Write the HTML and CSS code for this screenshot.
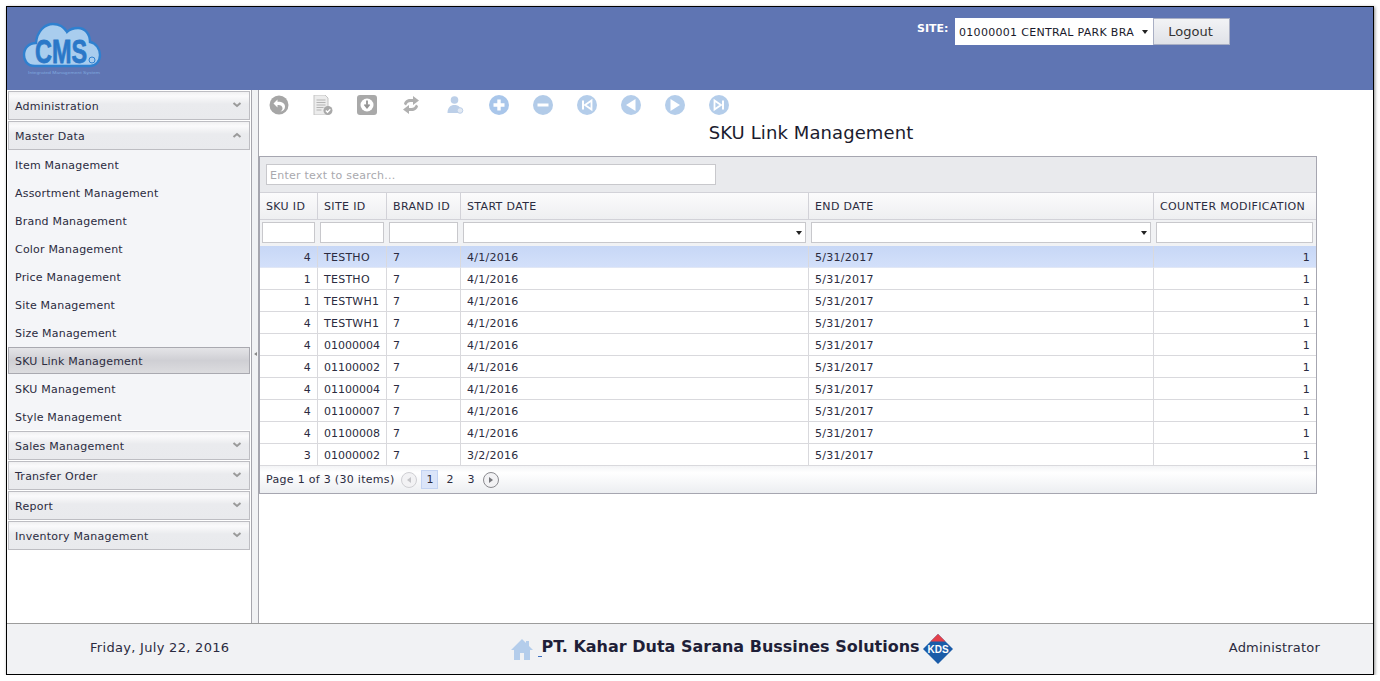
FILE: index.html
```html
<!DOCTYPE html>
<html lang="en">
<head>
<meta charset="utf-8">
<title>SKU Link Management</title>
<link rel="stylesheet" href="styles.css">
</head>
<body>
<div class="frame">
  <header class="header">
    <svg class="logo" width="80" height="56" viewBox="0 0 80 56">
      <path d="M11 43C2 43 0 36 0 32 0 25 5 20 12 20 13 8 21 1 29 1 35 1 40 4 43 9 46 6 50 5 54 5 61 5 66 11 66 19 72 20 76 26 76 32 76 38 72 43 66 43Z" fill="#a9cdee" stroke="#2f80cf" stroke-width="2.400"/>
      <text x="37" y="40" class="logo-text" text-anchor="middle" textLength="52" lengthAdjust="spacingAndGlyphs">CMS</text>
      <circle cx="68" cy="37" r="3" fill="#a9cdee" stroke="#2f80cf"/>
      <text x="4" y="51" class="logo-tag" textLength="72" lengthAdjust="spacingAndGlyphs">Integrated Management System</text>
    </svg>
    <div class="site">
      <span class="site-label">SITE:</span>
      <div class="site-select"><span class="site-value">01000001 CENTRAL PARK BRA</span><i class="arrow"></i></div>
      <div class="logout">Logout</div>
    </div>
  </header>
  <div class="main">
    <aside class="sidebar">
      <div class="group">Administration<svg class="chev" width="10" height="6" viewBox="0 0 10 6"><path d="M1.500 1l3.500 3 3.500-3" fill="none" stroke="#9a9a9a" stroke-width="2"/></svg></div>
      <div class="group">Master Data<svg class="chev" width="10" height="6" viewBox="0 0 10 6"><path d="M1.500 5l3.500-3 3.500 3" fill="none" stroke="#9a9a9a" stroke-width="2"/></svg></div>
      <ul class="items">
        <li class="item">Item Management</li>
        <li class="item">Assortment Management</li>
        <li class="item">Brand Management</li>
        <li class="item">Color Management</li>
        <li class="item">Price Management</li>
        <li class="item">Site Management</li>
        <li class="item">Size Management</li>
        <li class="item selected">SKU Link Management</li>
        <li class="item">SKU Management</li>
        <li class="item">Style Management</li>
      </ul>
      <div class="group">Sales Management<svg class="chev" width="10" height="6" viewBox="0 0 10 6"><path d="M1.500 1l3.500 3 3.500-3" fill="none" stroke="#9a9a9a" stroke-width="2"/></svg></div>
      <div class="group">Transfer Order<svg class="chev" width="10" height="6" viewBox="0 0 10 6"><path d="M1.500 1l3.500 3 3.500-3" fill="none" stroke="#9a9a9a" stroke-width="2"/></svg></div>
      <div class="group">Report<svg class="chev" width="10" height="6" viewBox="0 0 10 6"><path d="M1.500 1l3.500 3 3.500-3" fill="none" stroke="#9a9a9a" stroke-width="2"/></svg></div>
      <div class="group">Inventory Management<svg class="chev" width="10" height="6" viewBox="0 0 10 6"><path d="M1.500 1l3.500 3 3.500-3" fill="none" stroke="#9a9a9a" stroke-width="2"/></svg></div>
    </aside>
    <div class="splitter"><i class="split-arrow"></i></div>
    <main class="content">
      <div class="toolbar">
        <svg class="tool" viewBox="0 0 20 20"><circle cx="10" cy="10" r="9.500" fill="#a6a6a6"/><path d="M8.500 4.500L4.500 8.500 8.500 12.500V10c2.800-.3 4.700.6 5 3 .2 1.600-.8 2.800-2.200 3.700 3-.5 4.700-2.500 4.700-5 0-3.400-3-5.200-7.500-5V4.500z" fill="#fff"/></svg>
        <svg class="tool" viewBox="0 0 20 20"><path d="M1 0h11l3 3v17H1z" fill="#ececec" stroke="#c4c4c4"/><path d="M3.500 5h9M3.500 7.500h9M3.500 10h9M3.500 12.500h7M3.500 15h5" stroke="#b4b4b4"/><circle cx="15" cy="15.500" r="4.500" fill="#a9a9a9"/><path d="M12.800 15.500l1.700 1.700 2.800-3" fill="none" stroke="#fff" stroke-width="1.300"/></svg>
        <svg class="tool" viewBox="0 0 20 20"><rect x="0" y="0" width="20" height="20" rx="3" fill="#a9a9a9"/><circle cx="10" cy="10" r="6.500" fill="#fff"/><path d="M10 5.500v6M7.500 9.500l2.500 3 2.500-3" fill="none" stroke="#949494" stroke-width="1.800"/></svg>
        <svg class="tool" viewBox="0 0 20 20"><path d="M3 9c.5-3.500 3.500-5 6-5h3V1l6 4.500L12 10V7H9.500C7.500 7 6 8 5 10.500z" fill="#b0b0b0"/><path d="M17 11c-.5 3.500-3.500 5-6 5H8v3l-6-4.500L8 10v3h2.500c2 0 3.500-1 4.500-3.500z" fill="#b0b0b0"/></svg>
        <svg class="tool" viewBox="0 0 20 20"><circle cx="9.500" cy="5" r="3.800" fill="#bccfe8"/><path d="M2.500 18c0-5.500 3-8 7-8s7 2.500 7 8z" fill="#bccfe8"/><circle cx="15" cy="15.500" r="2.800" fill="#e2e9f3" stroke="#bccfe8"/></svg>
        <svg class="tool" viewBox="0 0 20 20"><circle cx="10" cy="10" r="10" fill="#a9c6ea"/><path d="M10 4.500v11M4.500 10h11" stroke="#fff" stroke-width="3.400"/></svg>
        <svg class="tool" viewBox="0 0 20 20"><circle cx="10" cy="10" r="10" fill="#b2cbe8"/><path d="M4.500 10h11" stroke="#fff" stroke-width="3"/></svg>
        <svg class="tool" viewBox="0 0 20 20"><circle cx="10" cy="10" r="10" fill="#b4cdea"/><path d="M6 5.500v9" stroke="#fff" stroke-width="2"/><path d="M14.500 5.500v9L8 10z" fill="none" stroke="#fff" stroke-width="1.800"/></svg>
        <svg class="tool" viewBox="0 0 20 20"><circle cx="10" cy="10" r="10" fill="#b4cdea"/><path d="M14.500 4v12L5 10z" fill="#fff"/></svg>
        <svg class="tool" viewBox="0 0 20 20"><circle cx="10" cy="10" r="10" fill="#b4cdea"/><path d="M5.500 4v12L15 10z" fill="#fff"/></svg>
        <svg class="tool" viewBox="0 0 20 20"><circle cx="10" cy="10" r="10" fill="#b4cdea"/><path d="M14 5.500v9" stroke="#fff" stroke-width="2"/><path d="M5.500 5.500v9L12 10z" fill="none" stroke="#fff" stroke-width="1.800"/></svg>
      </div>
      <h1 class="title">SKU Link Management</h1>
      <section class="grid">
        <div class="search-panel"><div class="search">Enter text to search...</div></div>
        <table class="data">
          <colgroup>
            <col class="c1"><col class="c2"><col class="c3"><col class="c4"><col class="c5"><col class="c6">
          </colgroup>
          <thead>
            <tr class="heads"><th>SKU ID</th><th>SITE ID</th><th>BRAND ID</th><th>START DATE</th><th>END DATE</th><th>COUNTER MODIFICATION</th></tr>
            <tr class="filters">
              <td><div class="filter"></div></td><td><div class="filter"></div></td><td><div class="filter"></div></td>
              <td><div class="filter"><i class="arrow"></i></div></td><td><div class="filter"><i class="arrow"></i></div></td><td><div class="filter"></div></td>
            </tr>
          </thead>
          <tbody>
            <tr class="row active"><td class="num">4</td><td>TESTHO</td><td>7</td><td>4/1/2016</td><td>5/31/2017</td><td class="num">1</td></tr>
            <tr class="row"><td class="num">1</td><td>TESTHO</td><td>7</td><td>4/1/2016</td><td>5/31/2017</td><td class="num">1</td></tr>
            <tr class="row"><td class="num">1</td><td>TESTWH1</td><td>7</td><td>4/1/2016</td><td>5/31/2017</td><td class="num">1</td></tr>
            <tr class="row"><td class="num">4</td><td>TESTWH1</td><td>7</td><td>4/1/2016</td><td>5/31/2017</td><td class="num">1</td></tr>
            <tr class="row"><td class="num">4</td><td class="code">01000004</td><td>7</td><td>4/1/2016</td><td>5/31/2017</td><td class="num">1</td></tr>
            <tr class="row"><td class="num">4</td><td class="code">01100002</td><td>7</td><td>4/1/2016</td><td>5/31/2017</td><td class="num">1</td></tr>
            <tr class="row"><td class="num">4</td><td class="code">01100004</td><td>7</td><td>4/1/2016</td><td>5/31/2017</td><td class="num">1</td></tr>
            <tr class="row"><td class="num">4</td><td class="code">01100007</td><td>7</td><td>4/1/2016</td><td>5/31/2017</td><td class="num">1</td></tr>
            <tr class="row"><td class="num">4</td><td class="code">01100008</td><td>7</td><td>4/1/2016</td><td>5/31/2017</td><td class="num">1</td></tr>
            <tr class="row"><td class="num">3</td><td class="code">01000002</td><td>7</td><td>3/2/2016</td><td>5/31/2017</td><td class="num">1</td></tr>
          </tbody>
        </table>
        <div class="pager">
          <span class="pager-info">Page 1 of 3 (30 items)</span>
          <span class="pg-btn off"><i class="tri-left"></i></span>
          <span class="pg current">1</span>
          <span class="pg">2</span>
          <span class="pg">3</span>
          <span class="pg-btn"><i class="tri-right"></i></span>
        </div>
      </section>
    </main>
  </div>
  <footer class="footer">
    <span class="foot-text">Friday, July 22, 2016</span>
    <div class="brand">
      <svg class="home" width="24" height="23" viewBox="0 0 24 23"><path d="M12 1L1 12h3v10h6v-7h4v7h6V12h3l-4-4V3h-3v2z" fill="#b4cdeb"/></svg>
      <span class="underscore"></span>
      <span class="brand-name">PT. Kahar Duta Sarana Bussines Solutions</span>
      <svg class="kds" width="30" height="30" viewBox="0 0 30 30">
        <path d="M15 0L30 15 15 30 0 15z" fill="#1b5ca8"/>
        <path d="M15 0L22.500 7.500H7.500z" fill="#e3404a"/>
        <text x="15" y="19" class="kds-text" text-anchor="middle">KDS</text>
      </svg>
    </div>
    <span class="foot-text foot-right">Administrator</span>
  </footer>
</div>
</body>
</html>
```
FILE: styles.css
```css
* { box-sizing: border-box; }
html, body { margin: 0; padding: 0; background: #fff; }
body { font-family: "DejaVu Sans", Verdana, sans-serif; font-size: 11px; color: #2b2b40; }

.frame {
  margin: 6px 0 0 6px;
  width: 1368px;
  height: 669px;
  border: 1px solid #000;
  box-shadow: 1px 1px 3px rgba(0,0,0,.45);
  display: flex;
  flex-direction: column;
}

.header {
  height: 83px;
  background: #5f75b3;
  display: flex;
  justify-content: space-between;
  align-items: flex-start;
  padding: 16px 143px 0 17px;
  flex: none;
}
.logo { display: block; overflow: visible; }
.logo-text { font-family: "Liberation Sans", sans-serif; font-weight: 700; font-size: 34px; fill: #2b78c8; stroke: #2b78c8; stroke-width: .8px; }
.logo-tag { font-family: "Liberation Sans", sans-serif; font-size: 3.5px; fill: #7fa8df; }

.site { display: flex; align-items: flex-start; margin-top: -5px; }
.site-label { color: #fff; font-weight: 700; font-size: 11px; margin: 4px 6px 0 0; width: 32px; }
.site-select {
  width: 198px; height: 27px;
  background: #fff;
  padding: 1px 5px 0 4px;
  display: flex; align-items: center; justify-content: space-between;
  color: #1a1a2c;
  font-size: 11px;
}
.site-value { white-space: nowrap; letter-spacing: .3px; }
.logout {
  width: 77px; height: 27px;
  border: 1px solid #a9afc4;
  background: linear-gradient(#f2f3f5, #e0e2e8);
  font-size: 13px; line-height: 25px; text-align: center;
  color: #333;
  padding-right: 2px;
}
.arrow { display: block; width: 0; height: 0; border: 3.5px solid transparent; border-top: 4px solid #222; border-bottom: 0; flex: none; }

.main { flex: 1; display: flex; min-height: 0; }

.sidebar { width: 245px; flex: none; padding: 1px 1px 0 1px; border-right: 1px solid #a6a6ad; background: #fff; }
.group {
  height: 29px; margin-bottom: 1px; width: 242px;
  border: 1px solid #bdbdc2;
  background: linear-gradient(#f0f0f2, #fafafb 15%, #eaebee 45%, #e9eaed);
  padding: 1px 7px 0 6px;
  display: flex; align-items: center; justify-content: space-between;
  letter-spacing: .25px;
}
.group .chev { margin-top: -3px; }
.items { list-style: none; margin: -1px 0 1px; padding: 0; width: 242px; background: #f4f5f8; }
.item { height: 28px; line-height: 32px; padding-left: 7px; letter-spacing: .2px; }
.item.selected {
  height: 27px; margin: 1px 0 0; line-height: 27px; padding-left: 6px;
  border: 1px solid #a9a9b0;
  background: linear-gradient(#e4e4e7, #cfcfd4 50%, #dcdcdf);
}

.splitter { width: 7px; flex: none; background: #f1f2f4; border-right: 1px solid #a6a6ad; position: relative; }
.split-arrow { position: absolute; left: 2px; top: 262px; border: 2.5px solid transparent; border-right: 3px solid #888; border-left: 0; }

.content { flex: 1; min-width: 0; background: #fff; }
.toolbar { display: flex; gap: 24px; height: 32px; padding: 5px 0 0 10px; }
.tool { width: 20px; height: 20px; display: block; flex: none; }
.title { margin: 0; height: 34px; font-weight: 400; font-size: 18px; line-height: 22px; text-align: center; color: #1b1b2e; padding-right: 10px; letter-spacing: .1px; }

.grid { width: 1058px; border: 1px solid #a6a6b0; }
.search-panel { height: 36px; background: #e9eaed; padding: 7px 0 0 6px; border-bottom: 1px solid #d2d2d8; }
.search { width: 450px; height: 21px; background: #fff; border: 1px solid #c8c8cc; padding-left: 3px; line-height: 21px; color: #a9a9ae; letter-spacing: .25px; }

.data { border-collapse: separate; border-spacing: 0; table-layout: fixed; width: 1056px; letter-spacing: .25px; }
.c1 { width: 58px; } .c2 { width: 69px; } .c3 { width: 74px; } .c4 { width: 348px; } .c5 { width: 345px; } .c6 { width: 162px; }
.heads th {
  height: 27px; padding: 0 0 0 6px; text-align: left; font-weight: 400; white-space: nowrap; letter-spacing: .35px;
  background: linear-gradient(#fbfbfc, #eeeff1);
  border-right: 1px solid #d2d2d8; border-bottom: 1px solid #d2d2d8;
}
.filters td { height: 26px; padding: 2px 3px 3px 2px; background: #f1f2f4; }
.filter { height: 21px; background: #fff; border: 1px solid #c8c8cc; display: flex; align-items: center; justify-content: flex-end; padding-right: 3px; }
.row td { height: 22px; padding: 2px 6px 0; white-space: nowrap; border-right: 1px solid #d9d9dd; border-bottom: 1px solid #d9d9dd; background: #fff; overflow: hidden; }
.row.active td { background: linear-gradient(#c7d7f6, #d3e0fa); border-bottom-color: #e1e7f5; }
.row .code { letter-spacing: 0; }
.num { text-align: right; }
.row td:last-child, .heads th:last-child { border-right: 0; }

.pager {
  height: 27px; background: linear-gradient(#f3f4f6, #ffffff 25%, #eceef1);
  display: flex; align-items: center; padding-left: 6px;
}
.pager-info { margin-right: 7px; letter-spacing: .3px; }
.pg-btn { width: 16px; height: 16px; border-radius: 50%; border: 1px solid #8a8a8f; background: #f2f2f4; display: flex; align-items: center; justify-content: center; flex: none; }
.pg-btn.off { border-color: #cfcfd3; }
.tri-left { border: 3.5px solid transparent; border-right: 4px solid #c4c4c8; border-left: 0; }
.tri-right { border: 3.5px solid transparent; border-left: 4px solid #77777c; border-right: 0; }
.pg { width: 17px; height: 19px; margin-right: 4px; text-align: center; line-height: 17px; border: 1px solid transparent; }
.pg.current { background: #dbe5f9; border-color: #c3d3f2; margin-right: 3px; }
.off + .pg { margin-left: 4px; }

.footer {
  flex: none; height: 51px;
  background: #f1f2f4; border-top: 1px solid #9c9c9c;
  display: flex; align-items: center; justify-content: space-between;
  padding: 0 53px 0 83px;
}
.foot-text { font-size: 13px; color: #2b2b40; letter-spacing: .3px; margin-top: -3px; }
.foot-right { letter-spacing: .2px; }
.brand { display: flex; align-items: center; margin-left: 4px; }
.home { display: block; margin-top: 1px; }
.underscore { width: 4px; height: 1px; background: #3d6fc0; margin: 15px 0 0 4px; }
.brand-name { font-weight: 700; font-size: 16px; color: #1f1f38; margin: -6px 3px 0 0; white-space: nowrap; }
.kds { display: block; margin-top: 0; }
.kds-text { font-family: "Liberation Sans", sans-serif; font-weight: 700; font-size: 10px; fill: #fff; }
```
